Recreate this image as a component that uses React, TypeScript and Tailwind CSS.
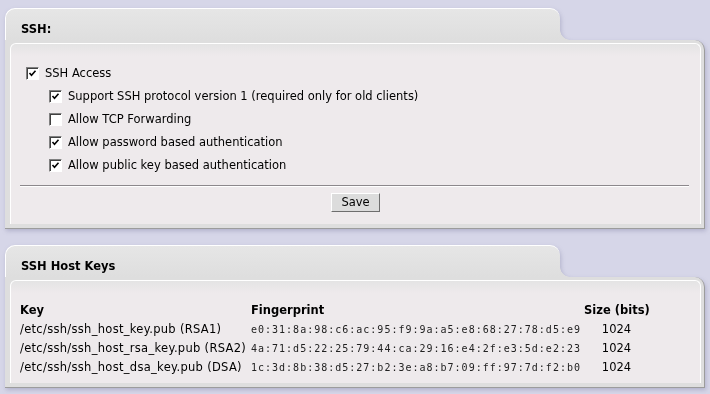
import type { ReactNode } from "react";

function CheckBox({ checked }: { checked: boolean }) {
  return (
    <span className="flex h-[13px] w-[13px] shrink-0 items-center justify-center border border-t-[#808080] border-l-[#808080] border-r-white border-b-white bg-white shadow-[inset_1px_1px_0_#404040]">
      {checked && (
        <svg width="9" height="9" viewBox="0 0 9 9">
          <path d="M1.5 4 L3.5 6.2 L7.5 1.8" fill="none" stroke="#000" strokeWidth="1.6" />
        </svg>
      )}
    </span>
  );
}

function Panel({ title, children }: { title: string; children: ReactNode }) {
  return (
    <div className="drop-shadow-[1px_2px_2px_rgba(70,70,120,0.25)]">
      {/* tab */}
      <div className="flex h-[32px]">
        <div className="w-[555px] rounded-t-[10px] border-t border-l border-white bg-[linear-gradient(#e6e6e6,#dedede)] pl-[15px] pt-[13px] font-bold leading-[14px]">
          {title}
        </div>
        <div className="flex flex-1 items-end">
          <div className="h-[10px] w-[10px] bg-[radial-gradient(circle_at_100%_0,transparent_9.5px,#dedede_10px)]" />
        </div>
      </div>
      {/* body */}
      <div className="rounded-tr-[10px] border-r border-b border-[#9c9c9c] bg-[#dedede] pt-[3px] pr-[3px] pb-[4px] pl-[5px]">
        <div className="rounded-t-[6px] border-t border-l border-r border-white border-b-[#c0c0c0] bg-[linear-gradient(#e4e4e4,#eeeaec_12px)]">
          {children}
        </div>
      </div>
    </div>
  );
}

const options = [
  { label: "Support SSH protocol version 1 (required only for old clients)", checked: true },
  { label: "Allow TCP Forwarding", checked: false },
  { label: "Allow password based authentication", checked: true },
  { label: "Allow public key based authentication", checked: true },
];

const keys = [
  { key: "/etc/ssh/ssh_host_key.pub (RSA1)", fp: "e0:31:8a:98:c6:ac:95:f9:9a:a5:e8:68:27:78:d5:e9", size: "1024" },
  { key: "/etc/ssh/ssh_host_rsa_key.pub (RSA2)", fp: "4a:71:d5:22:25:79:44:ca:29:16:e4:2f:e3:5d:e2:23", size: "1024" },
  { key: "/etc/ssh/ssh_host_dsa_key.pub (DSA)", fp: "1c:3d:8b:38:d5:27:b2:3e:a8:b7:09:ff:97:7d:f2:b0", size: "1024" },
];

export default function App() {
  return (
    <div className="h-[394px] w-[710px] overflow-hidden bg-[#d6d6e8] px-[5px] pt-[8px] font-['DejaVu_Sans',Verdana,sans-serif] text-[11.5px] text-black">
      <Panel title="SSH:">
        <div className="pt-[18px] pb-[12px]">
          <label className="flex h-[23px] items-center gap-[6px] pl-[15px]">
            <CheckBox checked />
            <span>SSH Access</span>
          </label>
          {options.map((o) => (
            <label key={o.label} className="flex h-[23px] items-center gap-[6px] pl-[38px]">
              <CheckBox checked={o.checked} />
              <span>{o.label}</span>
            </label>
          ))}
          <div className="mt-[8px] mr-[11px] ml-[9px] border-t border-b border-t-[#8c888c] border-b-white" />
          <div className="mt-[6px] flex justify-center">
            <button className="h-[19px] w-[49px] border border-t-white border-l-white border-r-[#6e6e6e] border-b-[#6e6e6e] bg-[#dcdcdc] text-[11.5px] leading-none">
              Save
            </button>
          </div>
        </div>
      </Panel>

      <div className="h-[16px]" />

      <Panel title="SSH Host Keys">
        <div className="pt-[20px] pb-[6px] pl-[9px]">
          <div className="grid h-[19px] grid-cols-[231px_333px_72px] items-center whitespace-nowrap font-bold">
            <span>Key</span>
            <span>Fingerprint</span>
            <span>Size (bits)</span>
          </div>
          {keys.map((k) => (
            <div key={k.key} className="grid h-[19px] grid-cols-[231px_333px_72px] items-center whitespace-nowrap">
              <span className="tracking-[0.3px]">{k.key}</span>
              <span className="font-['DejaVu_Sans_Mono',monospace] text-[10px] tracking-[1px] text-[#222]">
                {k.fp}
              </span>
              <span className="pr-[7px] text-center">{k.size}</span>
            </div>
          ))}
        </div>
      </Panel>
    </div>
  );
}
